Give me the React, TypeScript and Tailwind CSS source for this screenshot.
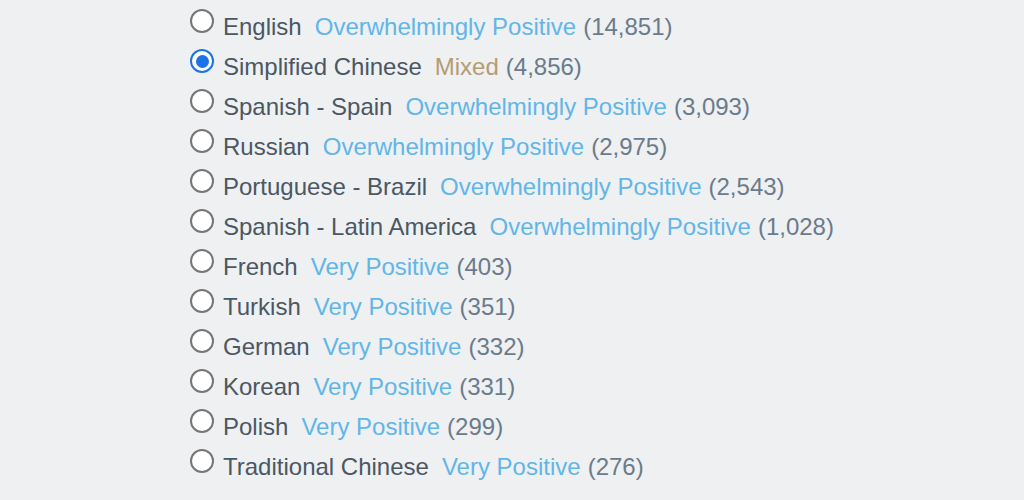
import { useState } from "react"

type Lang = {
  name: string
  rating: string
  count: string
}

const languages: Lang[] = [
  { name: "English", rating: "Overwhelmingly Positive", count: "14,851" },
  { name: "Simplified Chinese", rating: "Mixed", count: "4,856" },
  { name: "Spanish - Spain", rating: "Overwhelmingly Positive", count: "3,093" },
  { name: "Russian", rating: "Overwhelmingly Positive", count: "2,975" },
  { name: "Portuguese - Brazil", rating: "Overwhelmingly Positive", count: "2,543" },
  { name: "Spanish - Latin America", rating: "Overwhelmingly Positive", count: "1,028" },
  { name: "French", rating: "Very Positive", count: "403" },
  { name: "Turkish", rating: "Very Positive", count: "351" },
  { name: "German", rating: "Very Positive", count: "332" },
  { name: "Korean", rating: "Very Positive", count: "331" },
  { name: "Polish", rating: "Very Positive", count: "299" },
  { name: "Traditional Chinese", rating: "Very Positive", count: "276" },
]

function Radio({ checked }: { checked: boolean }) {
  if (checked) {
    return (
      <span className="mt-[2px] flex h-6 w-6 shrink-0 items-center justify-center rounded-full border-[2.5px] border-[#1a73e8] bg-white">
        <span className="h-[13px] w-[13px] rounded-full bg-[#1a73e8]" />
      </span>
    )
  }
  return <span className="mt-[2px] h-6 w-6 shrink-0 rounded-full border-2 border-[#767676] bg-white" />
}

export default function App() {
  const [selected, setSelected] = useState(1)

  return (
    <div className="min-h-[500px] w-[1024px] bg-[#eef0f2] pt-[7px] font-['Liberation_Sans',Arial,sans-serif] text-[24px]">
      <div className="ml-[190px] flex flex-col">
        {languages.map((lang, i) => (
          <label key={lang.name} className="flex h-10 cursor-pointer items-start" onClick={() => setSelected(i)}>
            <Radio checked={selected === i} />
            <span className="ml-[9px] whitespace-nowrap leading-[40px]">
              <span className="text-[#4b5763]">{lang.name}</span>
              <span className={"ml-[13px] " + (lang.rating === "Mixed" ? "text-[#b59c72]" : "text-[#62b6e7]")}>
                {lang.rating}
              </span>
              <span className="ml-[7px] text-[#6a7b8b]">({lang.count})</span>
            </span>
          </label>
        ))}
      </div>
    </div>
  )
}
